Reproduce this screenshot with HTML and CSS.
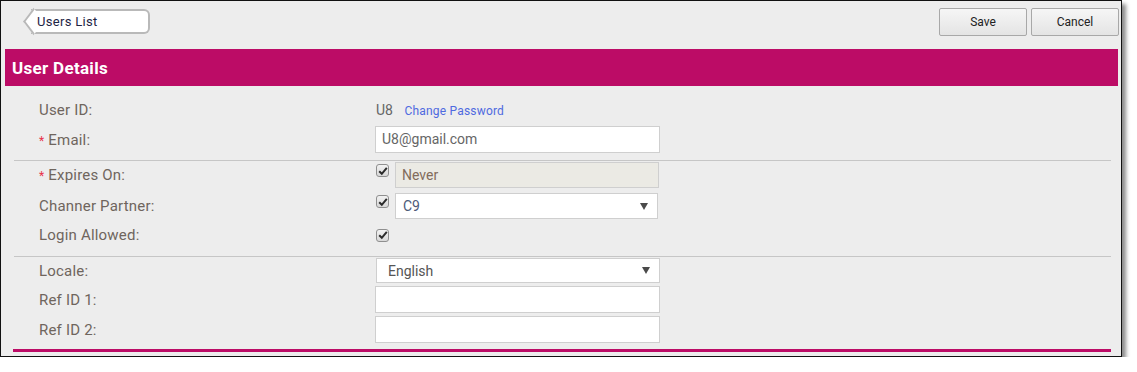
FILE: index.html
```html
<!DOCTYPE html>
<html lang="en">
<head>
    <meta charset="UTF-8">
    <title>User Details</title>
    <link rel="stylesheet" href="styles.css">
</head>
<body>
    <div class="window">
        <div class="toolbar">
            <a class="back-button" href="#"><span class="back-text">Users List</span></a>
            <div class="actions">
                <button class="action-button">Save</button>
                <button class="action-button">Cancel</button>
            </div>
        </div>

        <div class="panel">
            <h2 class="panel-title">User Details</h2>

            <div class="form-group group-account">
                <div class="form-row row-id">
                    <span class="field-label">User ID:</span>
                    <span class="field-value">U8 <a class="link" href="#">Change Password</a></span>
                </div>
                <div class="form-row">
                    <span class="field-label"><span class="required">*</span> Email:</span>
                    <div class="text-box">U8@gmail.com</div>
                </div>
            </div>

            <div class="form-group group-access">
                <div class="form-row">
                    <span class="field-label"><span class="required">*</span> Expires On:</span>
                    <div class="check-field">
                        <span class="check"><svg viewBox="0 0 10 10" width="10" height="10"><path d="M1.2 5.2 L3.8 7.8 L8.8 1.8" fill="none" stroke="#2b2b2b" stroke-width="2"/></svg></span>
                        <div class="text-box disabled">Never</div>
                    </div>
                </div>
                <div class="form-row">
                    <span class="field-label">Channer Partner:</span>
                    <div class="check-field">
                        <span class="check"><svg viewBox="0 0 10 10" width="10" height="10"><path d="M1.2 5.2 L3.8 7.8 L8.8 1.8" fill="none" stroke="#2b2b2b" stroke-width="2"/></svg></span>
                        <div class="select-box partner">C9
                            <svg class="caret" viewBox="0 0 8 7" width="8" height="7"><path d="M0 0 H8 L4 7 Z" fill="#4a4a4a"/></svg>
                        </div>
                    </div>
                </div>
                <div class="form-row row-login">
                    <span class="field-label">Login Allowed:</span>
                    <div class="check-field">
                        <span class="check"><svg viewBox="0 0 10 10" width="10" height="10"><path d="M1.2 5.2 L3.8 7.8 L8.8 1.8" fill="none" stroke="#2b2b2b" stroke-width="2"/></svg></span>
                    </div>
                </div>
            </div>

            <div class="form-group group-extra">
                <div class="form-row">
                    <span class="field-label">Locale:</span>
                    <div class="select-box locale">English
                        <svg class="caret" viewBox="0 0 8 7" width="8" height="7"><path d="M0 0 H8 L4 7 Z" fill="#4a4a4a"/></svg>
                    </div>
                </div>
                <div class="form-row">
                    <span class="field-label">Ref ID 1:</span>
                    <div class="text-box"></div>
                </div>
                <div class="form-row">
                    <span class="field-label">Ref ID 2:</span>
                    <div class="text-box"></div>
                </div>
            </div>
        </div>
    </div>
</body>
</html>
```

FILE: styles.css
```css
* {
    margin: 0;
    padding: 0;
    box-sizing: border-box;
}

body {
    font-family: Roboto, "Liberation Sans", sans-serif;
    background: #ffffff;
}

.window {
    width: 1122px;
    height: 357px;
    background: #ededed;
    border: 1px solid #111;
    box-shadow: 4px 4px 4px rgba(0, 0, 0, 0.45);
}

.toolbar {
    display: flex;
    justify-content: space-between;
    align-items: flex-start;
    padding: 7px 2px 0 30px;
    height: 48px;
}

.back-button {
    position: relative;
    display: flex;
    align-items: center;
    height: 25px;
    width: 119px;
    padding-left: 6px;
    margin-top: 1px;
    background: #fff;
    border: 2px solid #b9b9b9;
    border-left: none;
    border-radius: 0 6px 6px 0;
    color: #1d2444;
    font-size: 13px;
    letter-spacing: 0.3px;
    text-decoration: none;
}

.back-button::before {
    content: "";
    position: absolute;
    left: -6px;
    top: 2px;
    width: 15px;
    height: 15px;
    background: #fff;
    border-left: 2px solid #b9b9b9;
    border-bottom: 2px solid #b9b9b9;
    transform: rotate(45deg) skew(8deg, 8deg);
}

.back-text {
    position: relative;
}

.actions {
    display: flex;
    gap: 4px;
}

.action-button {
    width: 88px;
    height: 28px;
    font-family: inherit;
    font-size: 12px;
    color: #222;
    background: linear-gradient(#f6f6f6, #e4e4e4);
    border: 1px solid #a8a8a8;
    border-radius: 2px;
}

.panel {
    margin: 0 3px 0 4px;
}

.panel-title {
    height: 37px;
    background: #bc0c66;
    color: #fff;
    font-size: 17px;
    font-weight: bold;
    letter-spacing: 0.3px;
    line-height: 38px;
    padding-left: 7px;
}

.form-group {
    display: flex;
    flex-direction: column;
    margin: 0 7px 0 9px;
    padding-left: 25px;
}

.group-account {
    padding-top: 10px;
    padding-bottom: 7px;
    border-bottom: 1px solid #c6c6c6;
    gap: 2px;
}

.group-access {
    padding-top: 1px;
    padding-bottom: 10px;
    border-bottom: 1px solid #c6c6c6;
    gap: 5px;
}

.group-extra {
    margin-left: 8px;
    padding-left: 26px;
    padding-top: 1px;
    padding-bottom: 6px;
    border-bottom: 3px solid #bc0c66;
    gap: 3px;
}

.form-row {
    display: grid;
    grid-template-columns: 336px 285px;
    align-items: center;
}

.row-id {
    height: 28px;
}

.row-login {
    height: 22px;
}

.field-label {
    color: #6f655d;
    font-size: 15px;
    letter-spacing: 0.2px;
}

.required {
    color: #e8324a;
    font-size: 12px;
}

.field-value {
    padding-left: 1px;
    color: #666;
    font-size: 14px;
}

.link {
    margin-left: 8px;
    color: #4f6ae0;
    font-size: 12px;
    letter-spacing: 0.2px;
    text-decoration: none;
}

.text-box {
    height: 27px;
    background: #fff;
    border: 1px solid #cfcfcf;
    padding: 0 6px;
    line-height: 25px;
    color: #666;
    font-size: 14px;
}

.text-box.disabled {
    width: 264px;
    height: 26px;
    background: #ebeae4;
    color: #826c5c;
}

.check-field {
    display: flex;
    align-items: center;
    gap: 6px;
    padding-left: 1px;
}

.check {
    display: flex;
    align-items: center;
    justify-content: center;
    width: 13px;
    height: 13px;
    margin-top: -9px;
    background: linear-gradient(#f2f2f2, #d8d8d8);
    border: 1px solid #8f8f8f;
    border-radius: 3px;
}

.row-login .check {
    margin-top: 0;
}

.select-box {
    display: flex;
    align-items: center;
    justify-content: space-between;
    height: 26px;
    background: #fff;
    border: 1px solid #cfcfcf;
    padding: 0 9px 0 7px;
    font-size: 14px;
}

.select-box.partner {
    width: 263px;
    color: #4c5a78;
}

.select-box.locale {
    height: 25px;
    margin-left: 1px;
    padding-left: 11px;
    color: #555;
}

.caret {
    flex: none;
}
```
